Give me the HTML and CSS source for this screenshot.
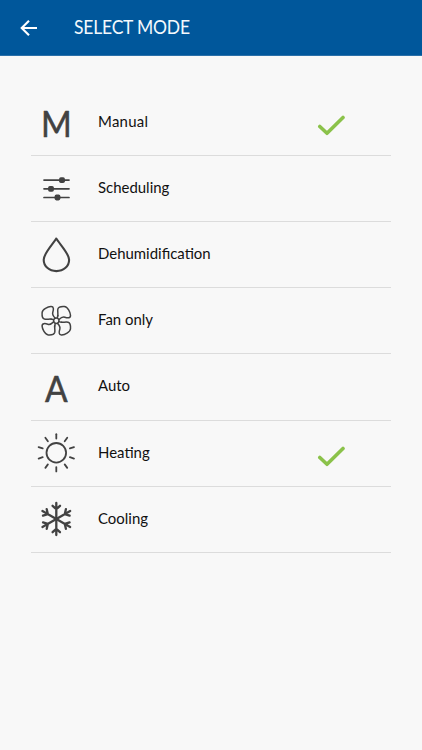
FILE: index.html
```
<!DOCTYPE html>
<html lang="en">
<head>
<meta charset="utf-8">
<title>Select mode</title>
<link rel="stylesheet" href="styles.css">
</head>
<body>
<header class="bar">
  <svg class="back" viewBox="0 0 18 18"><path d="M17 9H2M9 1.7 1.7 9 9 16.3"/></svg>
  <h1 class="title">SELECT MODE</h1>
</header>
<ul class="modes">
  <li class="mode">
    <svg class="icon" viewBox="-25 -32.5 50 65"><text class="letter" transform="translate(.3 14.5) scale(.92 1)">M</text></svg>
    <span class="label manual">Manual</span>
    <svg class="check" viewBox="0 0 28 22"><path d="m2.8 11.5 7.2 6.8L26 2.5"/></svg>
  </li>
  <li class="mode">
    <svg class="icon" viewBox="-25 -32.5 50 65"><g class="thin"><path d="M-12-8.4H13M-12 .3H13M-12 9H13"/></g><g class="solid"><rect x="3.1" y="-11.3" width="5.8" height="5.8" rx="1.8"/><rect x="-7.9" y="-2.6" width="5.8" height="5.8" rx="1.8"/><rect x="-1.4" y="6.1" width="5.8" height="5.8" rx="1.8"/></g></svg>
    <span class="label scheduling">Scheduling</span>
  </li>
  <li class="mode">
    <svg class="icon" viewBox="-25 -32.5 50 65"><path d="M.3-16C-3-10.5-12.3-1-12.3 5.2C-12.3 11.7-7 16.6.4 16.6S13.1 11.7 13.1 5.2C13.1-1 3.6-10.5.3-16Z"/></svg>
    <span class="label dehumidification">Dehumidification</span>
  </li>
  <li class="mode">
    <svg class="icon" viewBox="-25 -32.5 50 65">
      <defs><path id="blade" d="M1-2.8C2.6-6 .8-8.7 1.6-11.8C2.4-14.4 5-14.4 8-14.2C11.5-14 14-8.2 14.2-5.4C14.4-2.2 11-2.7 8.5-3.5C6-4.3 4.5-3 2.7-1.2"/></defs>
      <g class="fan" transform="translate(.3 .2)"><use href="#blade"/><use href="#blade" transform="rotate(90)"/><use href="#blade" transform="rotate(180)"/><use href="#blade" transform="rotate(270)"/><circle r="2.7"/><path d="M5 1.5h.3M-5-1.5h-.3M1.5-5v-.3M-1.5 5v.3"/></g>
    </svg>
    <span class="label fan-only">Fan only</span>
  </li>
  <li class="mode">
    <svg class="icon" viewBox="-25 -32.5 50 65"><text class="letter" transform="translate(.3 15) scale(.93 1)">A</text></svg>
    <span class="label auto">Auto</span>
  </li>
  <li class="mode">
    <svg class="icon" viewBox="-25 -32.5 50 65">
      <defs><path id="ray" d="M0-14.3V-18.6"/></defs>
      <g class="sun" transform="translate(.3 -.7)"><circle r="9.8"/><use href="#ray"/><use href="#ray" transform="rotate(36)"/><use href="#ray" transform="rotate(72)"/><use href="#ray" transform="rotate(108)"/><use href="#ray" transform="rotate(144)"/><use href="#ray" transform="rotate(180)"/><use href="#ray" transform="rotate(216)"/><use href="#ray" transform="rotate(252)"/><use href="#ray" transform="rotate(288)"/><use href="#ray" transform="rotate(324)"/></g>
    </svg>
    <span class="label heating">Heating</span>
    <svg class="check" viewBox="0 0 28 22"><path d="m2.8 11.5 7.2 6.8L26 2.5"/></svg>
  </li>
  <li class="mode">
    <svg class="icon" viewBox="-25 -32.5 50 65">
      <defs><path id="arm" d="M0 0V-16M-3.7-13.2 0-9.8 3.7-13.2"/></defs>
      <g class="snow" transform="translate(.3 -.5)"><use href="#arm"/><use href="#arm" transform="rotate(60)"/><use href="#arm" transform="rotate(120)"/><use href="#arm" transform="rotate(180)"/><use href="#arm" transform="rotate(240)"/><use href="#arm" transform="rotate(300)"/></g>
    </svg>
    <span class="label cooling">Cooling</span>
  </li>
</ul>
</body>
</html>
```
FILE: styles.css
```
* { box-sizing: border-box; }
body {
  margin: 0;
  min-height: 750px;
  background: #f8f8f8;
  color: #111;
  font-family: Lato, "Open Sans", sans-serif;
}
.bar {
  display: flex;
  align-items: center;
  height: 56px;
  padding-left: 20px;
  background: #00579b;
  border-bottom: 1px solid #2a70a9;
}
.back {
  width: 18px;
  height: 18px;
  fill: none;
  stroke: #fff;
  stroke-width: 2.1;
}
.title {
  margin: 0 0 2px 35.5px;
  color: #f4f9fd;
  font-size: 18.5px;
  font-weight: 400;
  line-height: 24px;
  letter-spacing: -0.2px;
  transform: scaleX(0.945);
  transform-origin: left;
}
.modes {
  list-style: none;
  margin: 33.6px 31px 0;
  padding: 0;
}
.mode {
  display: grid;
  grid-template-columns: 50px 1fr 28px;
  column-gap: 17px;
  align-items: center;
  height: 66.2px;
  padding-right: 46px;
  border-bottom: 1px solid #dcdcdc;
}
.icon {
  width: 50px;
  height: 65px;
  fill: none;
  stroke: #424242;
  stroke-width: 2.1;
  stroke-linejoin: round;
}
.letter {
  fill: #424242;
  stroke: #424242;
  stroke-width: 0.6;
  font-size: 36px;
  text-anchor: middle;
}
.thin { stroke-width: 1.7; stroke-linecap: round; }
.solid { fill: #424242; stroke: none; }
.fan { stroke-width: 1.5; stroke-linecap: round; }
.sun { stroke-width: 1.8; stroke-linecap: round; }
.snow { stroke-width: 2.3; stroke-linecap: round; }
.label {
  font-size: 14.95px;
  line-height: 20px;
  margin-bottom: 3px;
  white-space: nowrap;
}
.manual { letter-spacing: 0.25px; }
.check {
  width: 28px;
  height: 22px;
  margin-top: 8px;
  fill: none;
  stroke: #8bc24a;
  stroke-width: 3.6;
  stroke-linecap: round;
  stroke-linejoin: round;
}
```
